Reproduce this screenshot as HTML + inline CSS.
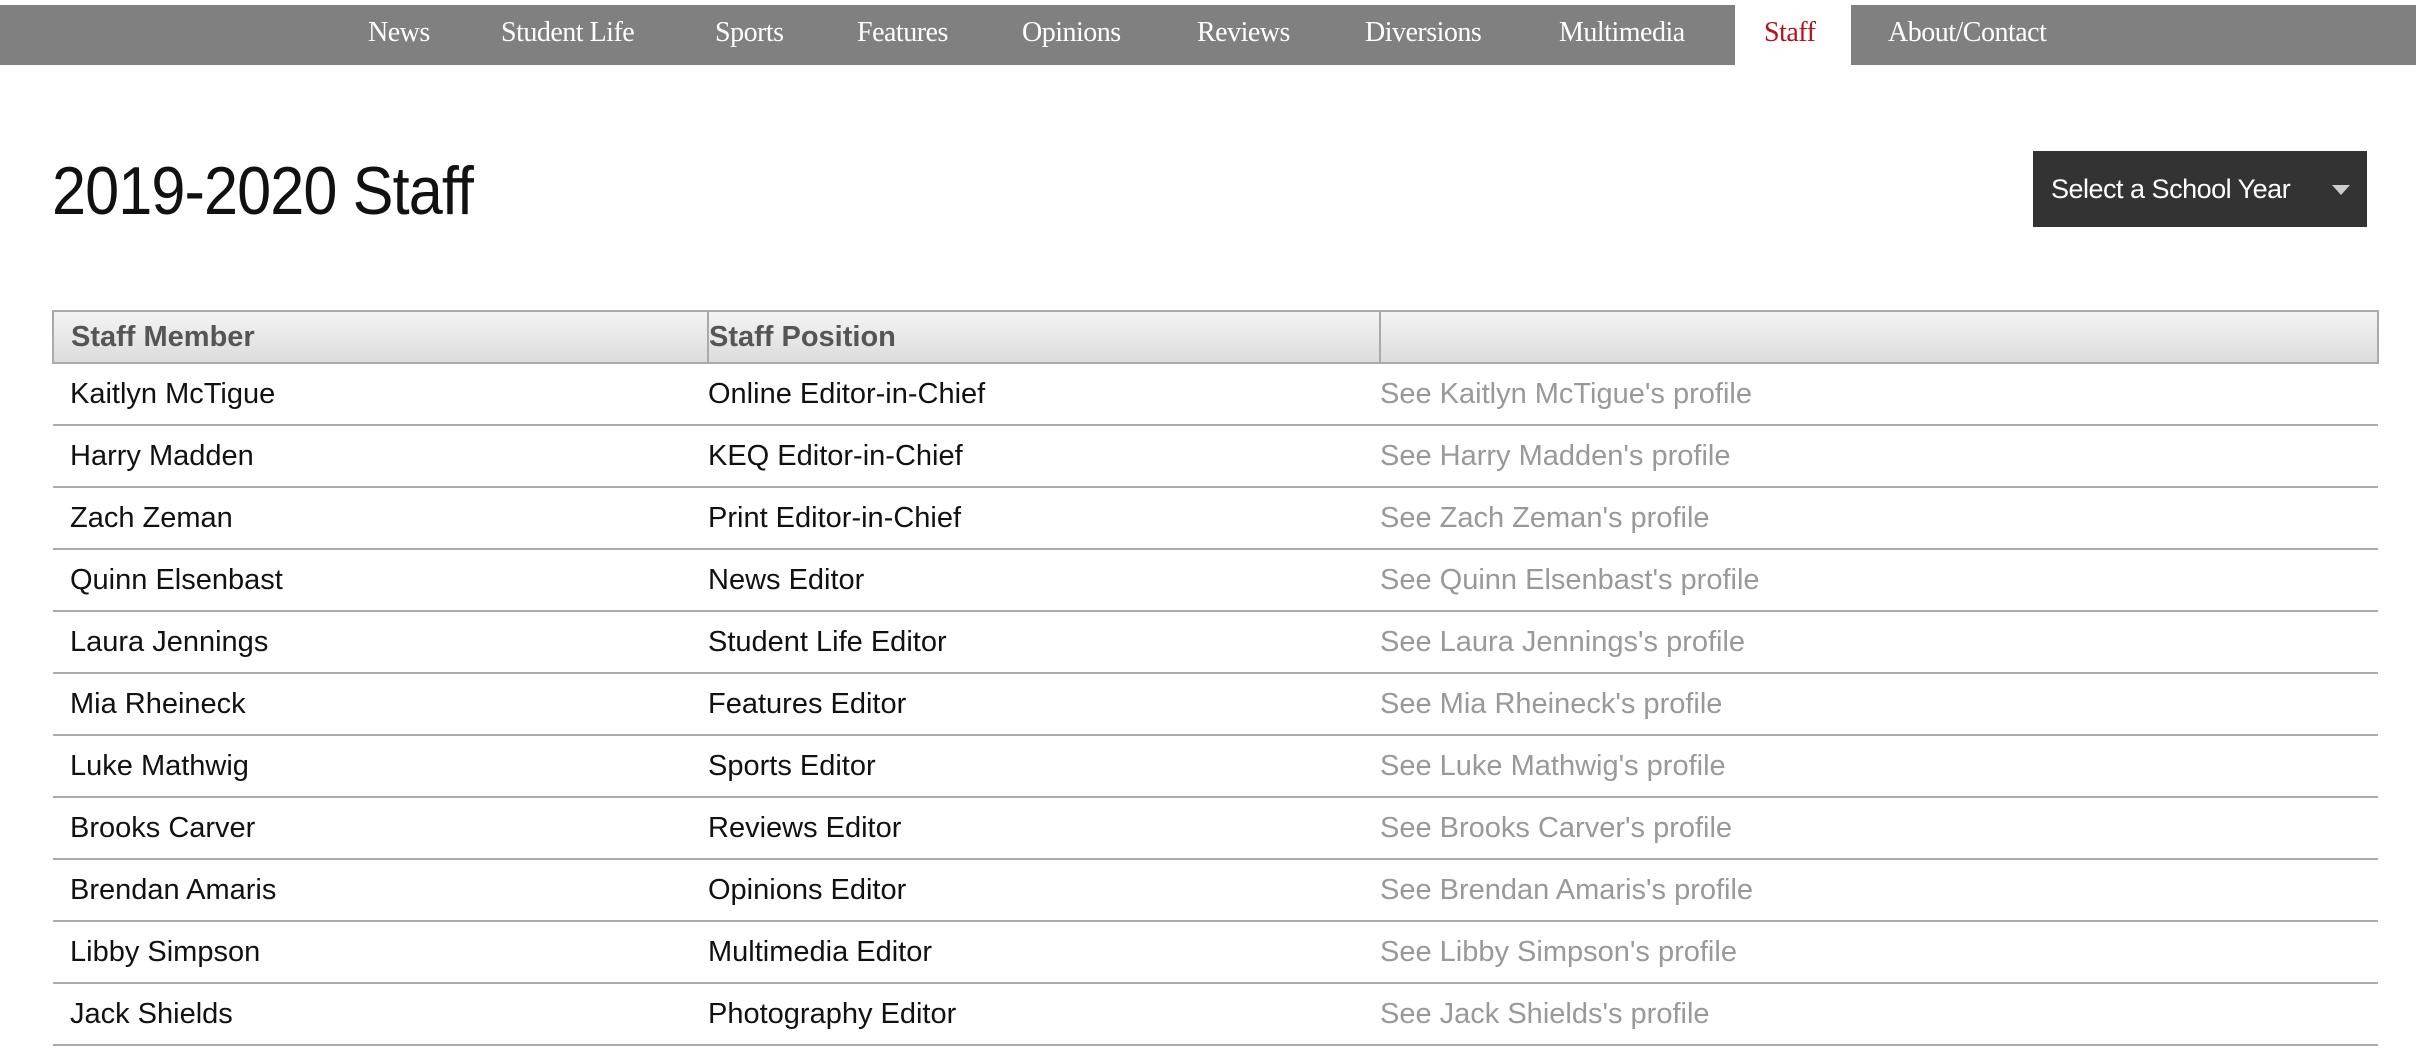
<!DOCTYPE html>
<html><head><meta charset="utf-8"><style>
*{margin:0;padding:0;box-sizing:border-box}
body{width:2416px;height:1050px;background:#fff;position:relative;overflow:hidden;font-family:"Liberation Sans",sans-serif}
.nav{position:absolute;left:0;top:5px;width:2416px;height:60px;background:#808080}
.nav span{position:absolute;top:12px;font-family:"Liberation Serif",serif;font-size:28px;color:#fff;letter-spacing:-0.5px}
.nav .on{top:-5px;height:70px;background:#fff;left:1735px;width:116px}
.nav .on span{position:static;display:block;margin:17px 0 0 29px;color:#b5121b}
h1{position:absolute;left:52px;top:152px;font-weight:normal;font-size:68px;color:#111;transform:scaleX(0.9);transform-origin:left;letter-spacing:-1px}
.sel{position:absolute;left:2033px;top:151px;width:334px;height:76px;background:#333;color:#fff;font-size:27px}
.sel span{position:absolute;left:18px;top:23px;letter-spacing:-0.5px}
.sel i{position:absolute;left:2338px;left:299px;top:34px;border-left:9px solid transparent;border-right:9px solid transparent;border-top:10px solid #ccc}
table{position:absolute;left:52px;top:310px;width:2327px;border-collapse:collapse;font-size:29px}
th{height:52px;text-align:left;font-weight:bold;color:#555;background:linear-gradient(#f4f4f4,#dcdcdc);border:2px solid #aaa;border-left:2px solid #aaa;padding:0}
td{height:62px;border-bottom:2px solid #aaa;padding:0;color:#111;vertical-align:middle}
td:first-child,th:first-child{padding-left:17px;width:655px}
td:nth-child(2),th:nth-child(2){width:672px}
td:nth-child(3){color:#999}
</style></head><body>
<div class="nav">
<span style="left:368px">News</span>
<span style="left:501px">Student Life</span>
<span style="left:715px">Sports</span>
<span style="left:857px">Features</span>
<span style="left:1022px">Opinions</span>
<span style="left:1197px">Reviews</span>
<span style="left:1365px">Diversions</span>
<span style="left:1559px">Multimedia</span>
<div class="on" style="position:absolute"><span>Staff</span></div>
<span style="left:1888px">About/Contact</span>
</div>
<h1>2019-2020 Staff</h1>
<div class="sel"><span>Select a School Year</span><i></i></div>
<table>
<tr><th>Staff Member</th><th>Staff Position</th><th style="border-left:none"></th></tr>
<tr><td>Kaitlyn McTigue</td><td>Online Editor-in-Chief</td><td>See Kaitlyn McTigue's profile</td></tr>
<tr><td>Harry Madden</td><td>KEQ Editor-in-Chief</td><td>See Harry Madden's profile</td></tr>
<tr><td>Zach Zeman</td><td>Print Editor-in-Chief</td><td>See Zach Zeman's profile</td></tr>
<tr><td>Quinn Elsenbast</td><td>News Editor</td><td>See Quinn Elsenbast's profile</td></tr>
<tr><td>Laura Jennings</td><td>Student Life Editor</td><td>See Laura Jennings's profile</td></tr>
<tr><td>Mia Rheineck</td><td>Features Editor</td><td>See Mia Rheineck's profile</td></tr>
<tr><td>Luke Mathwig</td><td>Sports Editor</td><td>See Luke Mathwig's profile</td></tr>
<tr><td>Brooks Carver</td><td>Reviews Editor</td><td>See Brooks Carver's profile</td></tr>
<tr><td>Brendan Amaris</td><td>Opinions Editor</td><td>See Brendan Amaris's profile</td></tr>
<tr><td>Libby Simpson</td><td>Multimedia Editor</td><td>See Libby Simpson's profile</td></tr>
<tr><td>Jack Shields</td><td>Photography Editor</td><td>See Jack Shields's profile</td></tr>
</table>
</body></html>
